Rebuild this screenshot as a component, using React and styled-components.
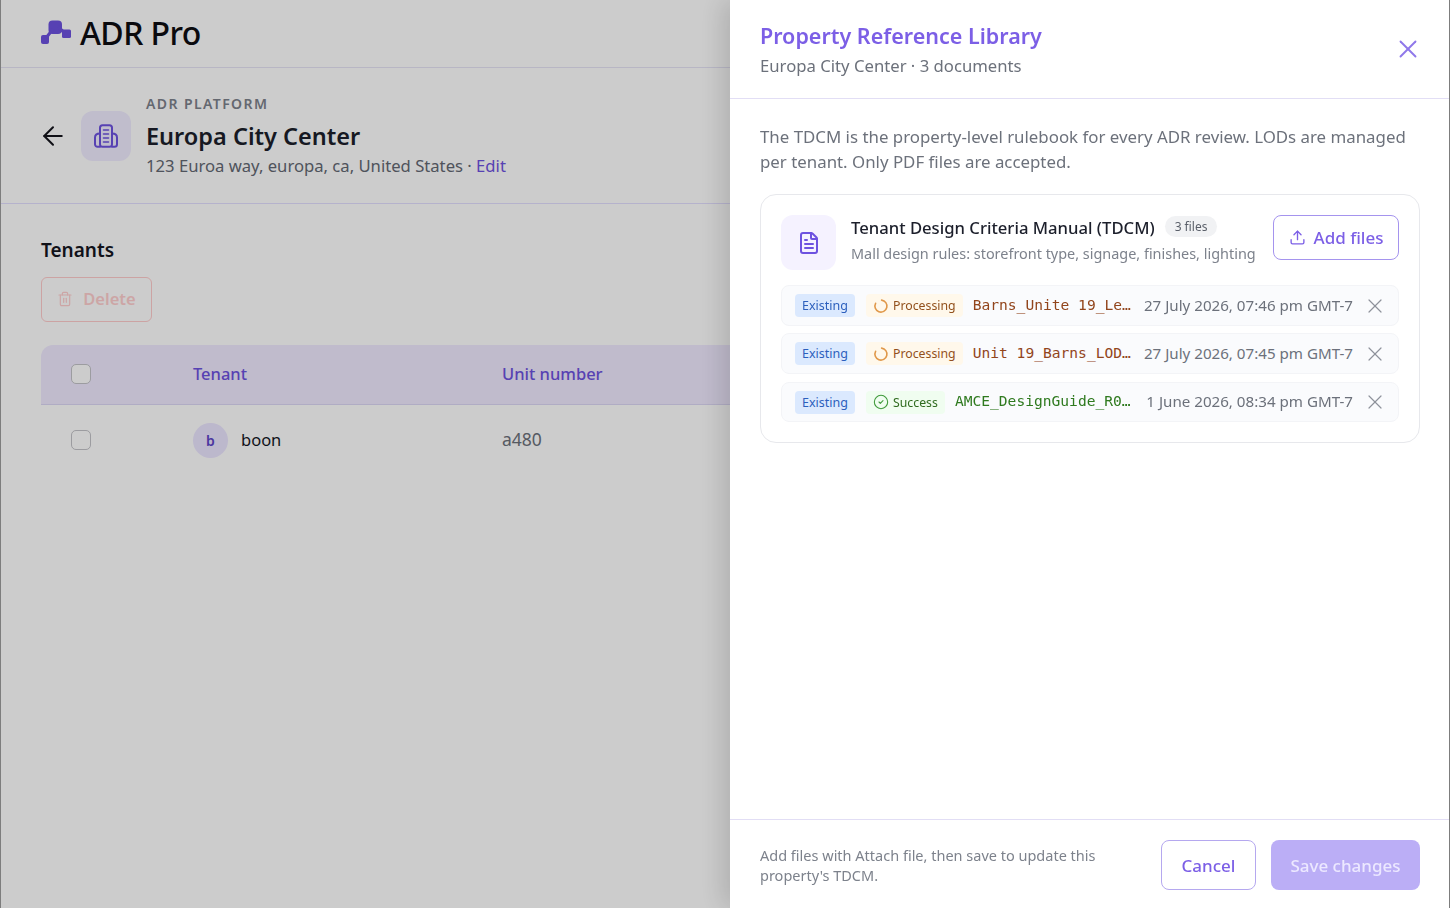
import styled, { createGlobalStyle } from 'styled-components';
import { ArrowLeft, FileText, Trash2, Upload, X, CircleCheck } from 'lucide-react';

const FONT = `'Noto Sans', 'Open Sans', sans-serif`;

const GlobalStyle = createGlobalStyle`
  html, body { margin: 0; padding: 0; height: 100%; }
  body { font-family: ${FONT}; background: #fff; overflow: hidden; }
  * { box-sizing: border-box; }
`;

const files = [
  { id: 1, status: 'Processing', name: 'Barns_Unite 19_Legal_Outline_Drawing.pdf', date: '27 July 2026, 07:46 pm GMT-7' },
  { id: 2, status: 'Processing', name: 'Unit 19_Barns_LOD_Final_Revision.pdf', date: '27 July 2026, 07:45 pm GMT-7' },
  { id: 3, status: 'Success', name: 'AMCE_DesignGuide_R04_Issued.pdf', date: '1 June 2026, 08:34 pm GMT-7' },
];

const LogoMark = () => (
  <svg width="30" height="24" viewBox="0 0 30 24" fill="#6d52e0" style={{ flex: 'none' }}>
    <rect x="0" y="15" width="8" height="9" rx="2" />
    <rect x="7.5" y="0.5" width="13.5" height="13.5" rx="4" />
    <rect x="21" y="9.5" width="9" height="8.5" rx="1.5" />
    <path d="M5 18 L12 9 M17 7 L24 13" fill="none" stroke="#6d52e0" strokeWidth="3" />
  </svg>
);

const BuildingIcon = () => (
  <svg width="24" height="24" viewBox="0 0 24 24" fill="none" stroke="#6d52e0" strokeWidth="2" strokeLinecap="round" strokeLinejoin="round">
    <rect x="6" y="1.2" width="12" height="21.6" rx="2.5" />
    <path d="M6 9.5C3 9.5 1 11 1 13.5v6.8a2.5 2.5 0 0 0 2.5 2.5H6" />
    <path d="M18 9.5c3 0 5 1.5 5 4v6.8a2.5 2.5 0 0 1-2.5 2.5H18" />
    <path d="M9.5 6h5M9.5 10h5M9.5 14h5M9.5 18h5" strokeWidth="1.6" />
  </svg>
);

const Spinner = () => (
  <svg width="16" height="16" viewBox="0 0 16 16" fill="none" stroke="#e0984a" strokeWidth="1.6" strokeLinecap="round">
    <path d="M8.6 2.1a6 6 0 1 1-6 3.2" />
  </svg>
);

const App = () => (
  <>
    <GlobalStyle />
    <Page>
      <TopBar>
        <LogoMark />
        <Brand>ADR Pro</Brand>
      </TopBar>
      <PropertyHeader>
        <BackButton>
          <ArrowLeft size={30} strokeWidth={1.6} />
        </BackButton>
        <IconTile>
          <BuildingIcon />
        </IconTile>
        <div>
          <Eyebrow>ADR PLATFORM</Eyebrow>
          <PropertyName>Europa City Center</PropertyName>
          <Address>
            123 Euroa way, europa, ca, United States · <EditLink>Edit</EditLink>
          </Address>
        </div>
      </PropertyHeader>
      <Section>
        <SectionTitle>Tenants</SectionTitle>
        <DeleteButton>
          <Trash2 size={16} strokeWidth={1.8} />
          Delete
        </DeleteButton>
        <TableHead>
          <Check />
          <HeadCell>Tenant</HeadCell>
          <HeadCell>Unit number</HeadCell>
        </TableHead>
        <TableRow>
          <Check />
          <TenantCell>
            <Avatar>b</Avatar>
            <TenantName>boon</TenantName>
          </TenantCell>
          <UnitCell>a480</UnitCell>
        </TableRow>
      </Section>
    </Page>
    <Overlay />
    <Drawer>
      <DrawerHeader>
        <div>
          <DrawerTitle>Property Reference Library</DrawerTitle>
          <DrawerSub>Europa City Center · 3 documents</DrawerSub>
        </div>
        <CloseButton>
          <X size={30} strokeWidth={1.5} />
        </CloseButton>
      </DrawerHeader>
      <DrawerBody>
        <Intro>
          The TDCM is the property-level rulebook for every ADR review. LODs are managed per tenant. Only PDF files are accepted.
        </Intro>
        <Card>
          <CardTop>
            <DocTile>
              <FileText size={24} strokeWidth={2} />
            </DocTile>
            <CardText>
              <CardTitleRow>
                <CardTitle>Tenant Design Criteria Manual (TDCM)</CardTitle>
                <CountPill>3 files</CountPill>
              </CardTitleRow>
              <CardDesc>Mall design rules: storefront type, signage, finishes, lighting</CardDesc>
            </CardText>
            <AddButton>
              <Upload size={17} strokeWidth={1.9} />
              Add files
            </AddButton>
          </CardTop>
          <FileList>
            {files.map((file) => {
              const ok = file.status === 'Success';
              return (
                <FileRow key={file.id}>
                  <ExistingTag>Existing</ExistingTag>
                  <StatusTag $ok={ok}>
                    {ok ? <CircleCheck size={16} strokeWidth={1.6} /> : <Spinner />}
                    {file.status}
                  </StatusTag>
                  <FileName $ok={ok}>{file.name}</FileName>
                  <FileDate>{file.date}</FileDate>
                  <RemoveButton>
                    <X size={24} strokeWidth={1.2} />
                  </RemoveButton>
                </FileRow>
              );
            })}
          </FileList>
        </Card>
      </DrawerBody>
      <DrawerFooter>
        <FooterNote>Add files with Attach file, then save to update this property's TDCM.</FooterNote>
        <CancelButton>Cancel</CancelButton>
        <SaveButton>Save changes</SaveButton>
      </DrawerFooter>
    </Drawer>
  </>
);

const Page = styled.div`
  height: 908px;
  background: #fff;
  overflow: hidden;
`;

const TopBar = styled.header`
  height: 68px;
  display: flex;
  align-items: center;
  gap: 9px;
  padding: 0 41px 3px;
  border-bottom: 1px solid #e6e4f6;
`;

const Brand = styled.div`
  font-size: 32px;
  font-weight: 500;
  letter-spacing: -0.6px;
  color: #0d0d12;
`;

const PropertyHeader = styled.div`
  height: 136px;
  display: flex;
  align-items: center;
  padding-left: 41px;
  border-bottom: 1px solid #e3dfff;
`;

const BackButton = styled.div`
  width: 40px;
  display: flex;
  color: #14141c;
  svg { flex: none; margin-left: -3px; }
`;

const IconTile = styled.div`
  width: 50px;
  height: 50px;
  margin-right: 15px;
  border-radius: 12px;
  background: #f1edff;
  display: flex;
  align-items: center;
  justify-content: center;
`;

const Eyebrow = styled.div`
  font-size: 14px;
  font-weight: 600;
  line-height: 20px;
  letter-spacing: 1.4px;
  color: #7d828c;
`;

const PropertyName = styled.h1`
  margin: 6px 0 2px;
  font-size: 23.5px;
  font-weight: 600;
  line-height: 32px;
  color: #1c1f2b;
`;

const Address = styled.div`
  font-size: 16.65px;
  line-height: 24px;
  color: #636873;
`;

const EditLink = styled.span`
  color: #6d52e0;
`;

const Section = styled.section`
  padding: 33px 0 0 41px;
`;

const SectionTitle = styled.h2`
  margin: 0 0 14px;
  font-size: 19px;
  font-weight: 600;
  line-height: 26px;
  color: #14161f;
`;

const DeleteButton = styled.button`
  width: 111px;
  height: 45px;
  display: flex;
  align-items: center;
  justify-content: center;
  gap: 10px;
  margin-bottom: 23px;
  padding: 0 0 2px;
  font: 600 16.5px ${FONT};
  color: #ffcfcf;
  background: transparent;
  border: 1px solid #ffcccc;
  border-radius: 6px;
`;

const TableHead = styled.div`
  height: 60px;
  display: grid;
  grid-template-columns: 152px 309px 1fr;
  align-items: center;
  margin-right: -20px;
  background: #f0eaff;
  border-bottom: 1px solid #ddd8f5;
  border-radius: 12px 12px 0 0;
`;

const TableRow = styled(TableHead)`
  height: 70px;
  background: #fff;
  border-bottom: 0;
  border-radius: 0;
`;

const Check = styled.div`
  width: 20px;
  height: 20px;
  margin: -1px 0 0 30px;
  border: 1.5px solid #c3c3c8;
  border-radius: 5px;
  background: #fff;
`;

const HeadCell = styled.div`
  padding-bottom: 2px;
  font-size: 16.5px;
  font-weight: 500;
  color: #6d52e0;
`;

const TenantCell = styled.div`
  display: flex;
  align-items: center;
  gap: 13px;
  font-size: 16.5px;
  color: #14161f;
`;

const TenantName = styled.span`
  padding-bottom: 2px;
`;

const Avatar = styled.span`
  width: 35px;
  height: 35px;
  border-radius: 50%;
  background: #ece6ff;
  color: #5d45c8;
  font-size: 14px;
  font-weight: 600;
  display: flex;
  align-items: center;
  justify-content: center;
`;

const UnitCell = styled.div`
  padding-bottom: 2px;
  font-size: 17.5px;
  color: #6c717b;
`;

const Overlay = styled.div`
  position: fixed;
  inset: 0;
  background: rgba(0, 0, 0, 0.2);
  border-left: 1px solid #7d7d7d;
`;

const Drawer = styled.aside`
  position: fixed;
  top: 0;
  right: 0;
  bottom: 0;
  width: 720px;
  display: flex;
  flex-direction: column;
  background: #fff;
  border-right: 1px solid #7d7d7d;
  box-shadow: -8px 0 24px rgba(0, 0, 0, 0.14);
`;

const DrawerHeader = styled.header`
  height: 99px;
  flex: none;
  display: flex;
  align-items: center;
  justify-content: space-between;
  padding: 0 26px 0 30px;
  border-bottom: 1px solid #e2def5;
`;

const DrawerTitle = styled.h2`
  margin: 0;
  font-size: 21.5px;
  font-weight: 600;
  line-height: 30px;
  color: #7c5fe6;
`;

const DrawerSub = styled.div`
  margin-top: 3px;
  font-size: 16.7px;
  line-height: 24px;
  color: #6c717b;
`;

const CloseButton = styled.div`
  display: flex;
  color: #8f78ea;
`;

const DrawerBody = styled.div`
  flex: 1;
  padding: 25px 29px 0 30px;
`;

const Intro = styled.p`
  margin: 0 0 20px;
  font-size: 16.85px;
  line-height: 25px;
  color: #6c717b;
`;

const Card = styled.div`
  height: 249px;
  padding: 20px;
  border: 1px solid #e7e8ec;
  border-radius: 16px;
`;

const CardTop = styled.div`
  display: flex;
  align-items: flex-start;
  margin-bottom: 15px;
`;

const DocTile = styled.div`
  width: 55px;
  height: 55px;
  flex: none;
  margin-right: 15px;
  border-radius: 12px;
  background: #f5f2ff;
  color: #6d52e0;
  display: flex;
  align-items: center;
  justify-content: center;
`;

const CardText = styled.div`
  flex: 1;
  min-width: 0;
  padding-top: 1px;
`;

const CardTitleRow = styled.div`
  display: flex;
  align-items: center;
  gap: 10px;
  height: 24px;
`;

const CardTitle = styled.div`
  font-size: 16.67px;
  font-weight: 500;
  line-height: 24px;
  white-space: nowrap;
  color: #1c1f2b;
`;

const CountPill = styled.span`
  height: 21px;
  margin-top: -3px;
  padding: 0 10px;
  display: flex;
  align-items: center;
  border-radius: 11px;
  background: #f1f2f4;
  font-size: 12px;
  color: #5a5f69;
`;

const CardDesc = styled.div`
  margin-top: 3px;
  font-size: 14.43px;
  line-height: 22px;
  white-space: nowrap;
  color: #7d828c;
`;

const AddButton = styled.button`
  width: 126px;
  height: 45px;
  flex: none;
  display: flex;
  align-items: center;
  justify-content: center;
  gap: 8px;
  padding: 0;
  font: 500 17px ${FONT};
  color: #7c5fe6;
  background: #fff;
  border: 1px solid #a594ee;
  border-radius: 8px;
`;

const FileList = styled.div`
  display: flex;
  flex-direction: column;
  gap: 7px;
`;

const FileRow = styled.div`
  height: 41px;
  display: flex;
  align-items: center;
  padding: 0 11px 0 13px;
  background: #fafbfd;
  border: 1px solid #f3f4f7;
  border-radius: 8px;
  &:last-child { height: 40px; margin-top: 1px; }
`;

const ExistingTag = styled.span`
  width: 60px;
  height: 23px;
  flex: none;
  margin-right: 11px;
  display: flex;
  align-items: center;
  justify-content: center;
  border-radius: 4px;
  background: #dbe9fe;
  color: #2c5fbd;
  font-size: 12.5px;
`;

const StatusTag = styled.span`
  height: 23px;
  flex: none;
  margin-right: 10px;
  padding: 0 7px;
  display: flex;
  align-items: center;
  gap: 4px;
  border-radius: 4px;
  background: ${({ $ok }) => ($ok ? '#f0fdf0' : '#fff8eb')};
  color: ${({ $ok }) => ($ok ? '#2f6b1f' : '#92501c')};
  font-size: 12.3px;
  svg { flex: none; color: #3f9a3a; }
`;

const FileName = styled.span`
  flex: 1;
  min-width: 0;
  overflow: hidden;
  text-overflow: ellipsis;
  white-space: nowrap;
  margin-bottom: 2px;
  line-height: 24px;
  font-family: 'DejaVu Sans Mono', monospace;
  font-size: 14.6px;
  color: ${({ $ok }) => ($ok ? '#2f7a1f' : '#92451c')};
`;

const FileDate = styled.span`
  flex: none;
  margin: 0 0 2px 12px;
  font-size: 15.15px;
  white-space: nowrap;
  color: #6c717b;
`;

const RemoveButton = styled.span`
  flex: none;
  margin-left: 10px;
  display: flex;
  color: #8e929b;
`;

const DrawerFooter = styled.footer`
  height: 89px;
  flex: none;
  display: flex;
  align-items: center;
  padding: 2px 29px 0 30px;
  border-top: 1px solid #e2def5;
`;

const FooterNote = styled.p`
  flex: 1;
  margin: 0 auto 0 0;
  max-width: 370px;
  font-size: 14.5px;
  line-height: 20px;
  color: #7d828c;
`;

const CancelButton = styled.button`
  width: 95px;
  height: 50px;
  margin-right: 15px;
  padding: 0;
  font: 500 17px ${FONT};
  color: #7c5fe6;
  background: #fff;
  border: 1px solid #b5a8ef;
  border-radius: 8px;
`;

const SaveButton = styled.button`
  width: 149px;
  height: 50px;
  padding: 0;
  font: 500 17px ${FONT};
  color: #ece8ff;
  background: #bbaef6;
  border: 0;
  border-radius: 8px;
`;

export default App;
